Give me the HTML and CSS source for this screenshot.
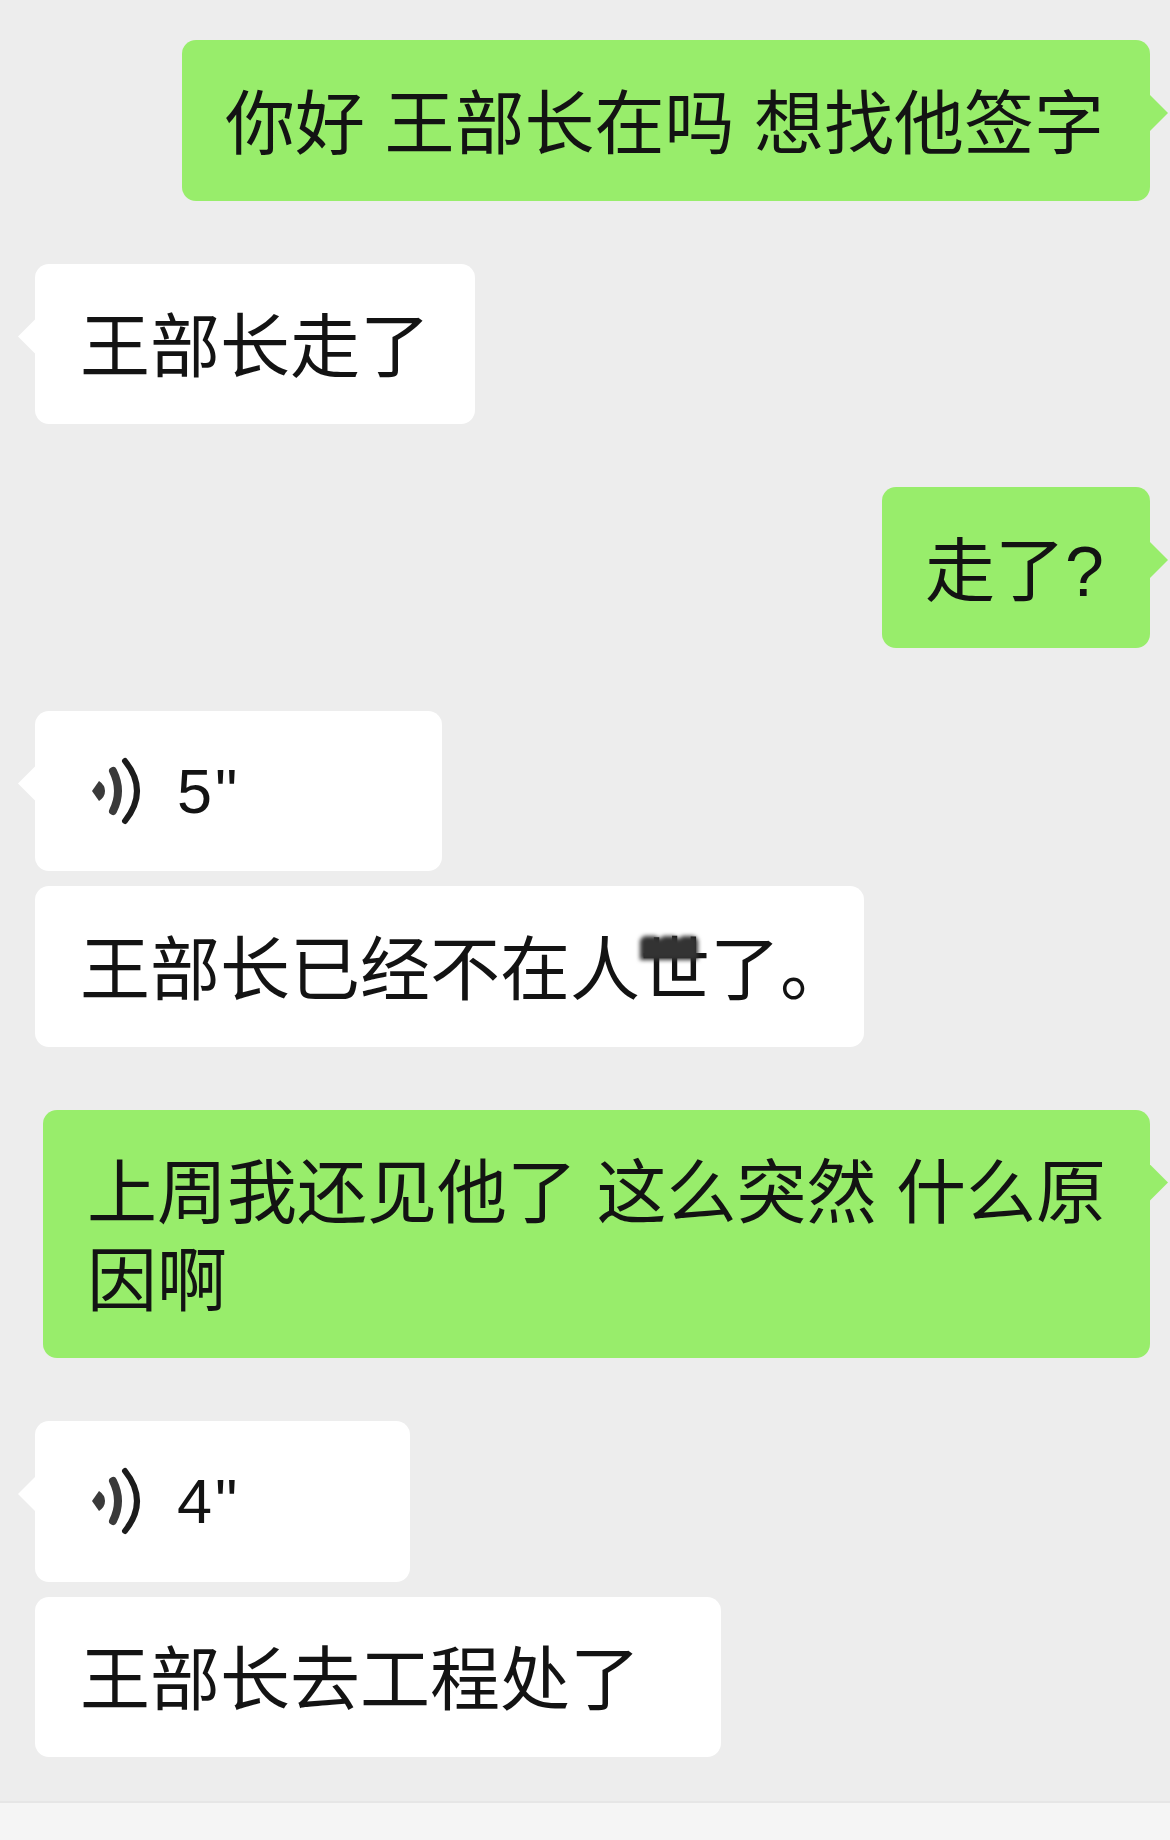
FILE: index.html
```html
<!DOCTYPE html>
<html lang="zh-CN">
<head>
<meta charset="utf-8">
<title>聊天记录</title>
<link rel="stylesheet" href="styles.css">
</head>
<body>
<main class="chat">
  <div class="msg me first"><div class="bubble">你好 王部长在吗 想找他签字</div></div>
  <div class="msg other"><div class="bubble">王部长走了</div></div>
  <div class="msg me"><div class="bubble">走了?</div></div>
  <div class="msg other">
    <div class="bubble voice voice-5">
      <svg class="wave" viewBox="0 0 50 70" aria-hidden="true">
        <path class="dot" d="M2 35 L9 25 Q15 29 15 35 Q15 41 9 45 Z"/>
        <path class="mid" d="M23 15 Q33 35 23 55"/>
        <path class="out" d="M35 5 Q59 35 35 65"/>
      </svg>
      <span class="secs">5"</span>
    </div>
  </div>
  <div class="msg other follow"><div class="bubble">王部长已经不在人<span class="masked">世<i class="smudge"></i></span>了<span class="stop">。</span></div></div>
  <div class="msg me"><div class="bubble wide">上周我还见他了 这么突然 什么原因啊</div></div>
  <div class="msg other">
    <div class="bubble voice voice-4">
      <svg class="wave" viewBox="0 0 50 70" aria-hidden="true">
        <path class="dot" d="M2 35 L9 25 Q15 29 15 35 Q15 41 9 45 Z"/>
        <path class="mid" d="M23 15 Q33 35 23 55"/>
        <path class="out" d="M35 5 Q59 35 35 65"/>
      </svg>
      <span class="secs">4"</span>
    </div>
  </div>
  <div class="msg other follow"><div class="bubble roomy">王部长去工程处了</div></div>
</main>
<footer class="inputbar"></footer>
</body>
</html>
```

FILE: styles.css
```css
* { box-sizing: border-box; }
html, body { margin: 0; height: 100%; }
body {
  width: 1170px;
  height: 1840px;
  overflow: hidden;
  display: flex;
  flex-direction: column;
  background: #ededed;
  color: #131313;
  font-family: "Liberation Sans", "Noto Sans CJK SC", sans-serif;
  font-size: 70px;
  line-height: 88px;
}
.chat { flex: 1; padding: 40px 20px 0 35px; display: flex; flex-direction: column; }
.msg { display: flex; margin-top: 63px; }
.msg.first { margin-top: 0; }
.msg.follow { margin-top: 15px; }
.msg.me { justify-content: flex-end; }
.bubble {
  position: relative;
  padding: 40.5px 45px 32px 45px;
  border-radius: 14px;
  background: #fff;
  white-space: nowrap;
  filter: blur(0.5px);
}
.me .bubble { background: #98ed6b; padding-left: 43px; padding-right: 46px; }
.me .wide { width: 1107px; padding-left: 44px; padding-right: 43px; white-space: normal; }
.roomy { width: 686px; }
.bubble::before {
  content: "";
  position: absolute;
  top: 55px;
  width: 18px;
  height: 36px;
}
.other .bubble::before { left: -17px; background: #fff; clip-path: polygon(100% 0, 0 50%, 100% 100%); }
.me .bubble::before { right: -18px; background: #98ed6b; clip-path: polygon(0 0, 100% 50%, 0 100%); }
.follow .bubble::before { display: none; }
.voice { display: flex; align-items: center; gap: 37px; padding: 0 0 0 55px; height: 160.5px; }
.voice-5 { width: 407px; }
.voice-4 { width: 375px; }
.wave { width: 50px; height: 70px; flex: none; overflow: visible; }
.wave path { fill: none; stroke-linecap: round; }
.wave .dot { fill: #3a3a3a; }
.wave .mid { stroke: #3a3a3a; stroke-width: 8px; }
.wave .out { stroke: #1c1c1c; stroke-width: 6px; }
.secs { font-size: 63px; line-height: 70px; letter-spacing: 3px; }
.stop { margin-right: -31px; }
.masked { position: relative; display: inline-block; }
.smudge {
  position: absolute;
  left: 0;
  top: 9px;
  width: 58px;
  height: 24px;
  background:
    radial-gradient(circle at 10px 10px, #333 11px, transparent 12px),
    radial-gradient(circle at 29px 10px, #333 11px, transparent 12px),
    radial-gradient(circle at 48px 10px, #333 11px, transparent 12px),
    linear-gradient(transparent 10px, #333 10px);
  filter: blur(2px);
}
.inputbar {
  height: 39px;
  background: #f5f5f5;
  border-top: 2px solid #e6e6e6;
}
```
